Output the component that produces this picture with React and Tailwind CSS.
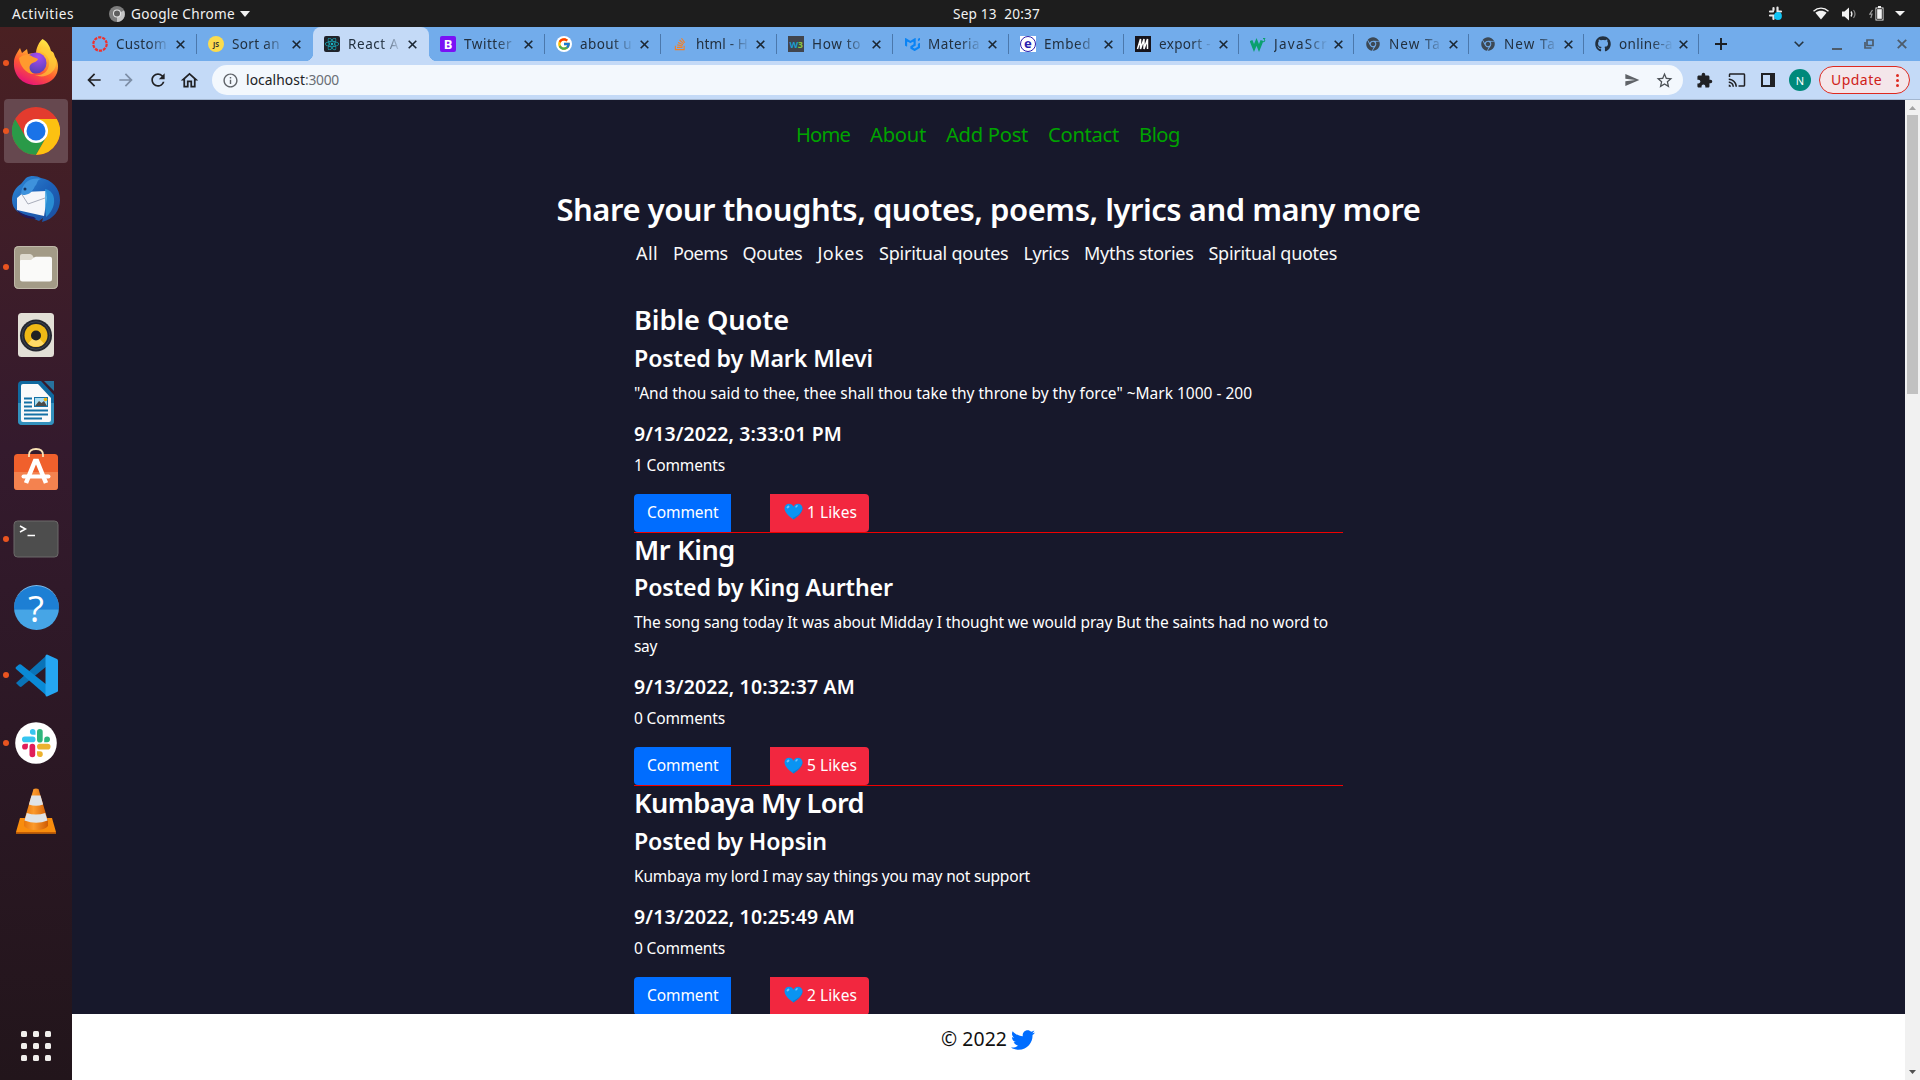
import React, { useLayoutEffect, useRef } from "react";
import { FaGithub, FaTwitter, FaChrome, FaReact, FaStackOverflow } from "react-icons/fa";
import { FcGoogle } from "react-icons/fc";
import { SiMui } from "react-icons/si";
import {
  MdExtension, MdCast, MdSend, MdStarBorder, MdArrowBack, MdArrowForward,
  MdRefresh, MdOutlineHome, MdInfoOutline,
} from "react-icons/md";

// Spreads the letters of one line so that it takes exactly `w` pixels.
function Fit({ w, className = "", children }) {
  const ref = useRef(null);
  useLayoutEffect(() => {
    const el = ref.current;
    el.style.letterSpacing = "0px";
    const natural = el.getBoundingClientRect().width;
    el.style.letterSpacing = `${(w - natural) / el.textContent.length}px`;
  }, [w, children]);
  return (
    <span ref={ref} className={`inline-block whitespace-pre ${className}`}>
      {children}
    </span>
  );
}

/* ---------- top bar ---------- */

function TopBar() {
  return (
    <header className="grid h-[27px] shrink-0 grid-cols-3 items-center bg-[#1d1d1d] text-[13.6px] leading-none text-[#f2f2f2]">
      <div className="flex items-center pl-3">
        <Fit w={62}>Activities</Fit>
        <svg className="mr-1.5 ml-[35px] h-4 w-4" viewBox="0 0 16 16">
          <circle cx="8" cy="8" r="8" fill="#7d7d7d" />
          <path d="M8 8 15 4.500A8 8 0 0 1 8 16Z" fill="#c4c4c4" />
          <circle cx="8" cy="7.500" r="4" fill="#e6e6e6" />
          <circle cx="8" cy="7.500" r="3" fill="#5e5e5e" />
        </svg>
        <Fit w={104}>Google Chrome</Fit>
        <svg className="ml-[5px] h-[6px] w-[10px]" viewBox="0 0 10 6"><path d="M0 0h10L5 6Z" fill="#f2f2f2" /></svg>
      </div>
      <div className="pl-[313px]">
        <Fit w={87}>{"Sep 13  20:37"}</Fit>
      </div>
      <div className="flex items-center justify-end pr-[15px]">
        <svg className="h-[15px] w-[15px]" viewBox="0 0 15 15">
          <g stroke="#e8e8e8" strokeWidth="2.200" strokeLinecap="round">
            <path d="M5.500 2v2M2 5.500h3M9.500 1.500v4M11 5.500h2M2 9.500h4M5.500 10v3" />
          </g>
          <circle cx="10" cy="10" r="3.900" fill="#0fc4f5" />
        </svg>
        <svg className="ml-[30px] h-[13px] w-[16px]" viewBox="0 0 16 13">
          <path d="M.5 4.200C5 .1 11 .1 15.500 4.200" fill="none" stroke="#f2f2f2" strokeWidth="1.400" />
          <path d="M2.400 5.800C6 3.200 10 3.200 13.600 5.800L8 12.500Z" fill="#f2f2f2" />
        </svg>
        <svg className="ml-[13px] h-[14px] w-[15px]" viewBox="0 0 15 14">
          <path d="M0 4.500h2.500L7 0.500v13L2.500 9.500H0Z" fill="#f2f2f2" />
          <path d="M9 4.500q1.800 2.500 0 5" fill="none" stroke="#f2f2f2" strokeWidth="1.300" />
          <path d="M11.500 3q3 4 0 8" fill="none" stroke="#8a8a8a" strokeWidth="1.200" />
        </svg>
        <svg className="ml-[12px] h-[15px] w-[15px]" viewBox="0 0 15 15">
          <path d="M3.500 4 .8 8.200H3L1.800 12" fill="none" stroke="#9a9a9a" strokeWidth="1.200" />
          <path d="M9 0h3v1.500h2.500v13h-8v-13H9Z" fill="#f2f2f2" />
          <path d="M7.700 2.700h5.600v10.600H7.700Z" fill="none" stroke="#1d1d1d" strokeWidth=".9" />
        </svg>
        <svg className="ml-[11px] h-[5px] w-[10px]" viewBox="0 0 10 5"><path d="M0 0h10L5 5Z" fill="#f2f2f2" /></svg>
      </div>
    </header>
  );
}

/* ---------- dock ---------- */

const Firefox = () => (
  <svg className="mb-[2px] h-[48px] w-[46px]" viewBox="0 0 46 48">
    <defs>
      <linearGradient id="ffBody" x1=".8" y1="0" x2=".3" y2="1">
        <stop offset="0" stopColor="#fff04a" /><stop offset=".35" stopColor="#ffb52e" />
        <stop offset=".65" stopColor="#ff5a32" /><stop offset="1" stopColor="#e5107c" />
      </linearGradient>
      <radialGradient id="ffGlobe" cx=".6" cy=".2" r=".9">
        <stop offset="0" stopColor="#a94cf0" /><stop offset="1" stopColor="#4d3fae" />
      </radialGradient>
    </defs>
    <path d="M29.500 1C35 4 37 9 38 13c3 1 3 3 4 6 3 4 4 10 2 16C41 43 33 47 23 47 9 47 0 37 1 24c0-5 3-9 6-14l2 5 5-4 1 5c3-1 6-1 8 0 0-6 3-12 6.500-15Z" fill="url(#ffBody)" />
    <circle cx="23" cy="25" r="10.500" fill="url(#ffGlobe)" />
    <path d="M6 20c5-4 10-4 14-1 2 1 4 1 5 2-1 3-4 3-7 5-3 3-1 8 3 10-8 0-14-8-15-16Z" fill="#ff9a2e" />
    <path d="M26 13c8 2 11 8 10 14-1 7-7 11-14 10 9 4 19-1 21-10 1-7-3-13-9-17-3-1-6 0-8 3Z" fill="#ffce3a" opacity=".65" />
  </svg>
);
const Chrome = () => (
  <svg className="h-12 w-12" viewBox="0 0 48 48">
    <circle cx="24" cy="24" r="24" fill="#e33b2e" />
    <path d="M3.200 12A24 24 0 0 0 24 48L34.400 30 24 24 13.600 30Z" fill="#2a9a48" />
    <path d="M24 12H44.800A24 24 0 0 1 24 48L34.400 30Z" fill="#fcc111" />
    <circle cx="24" cy="24" r="12" fill="#fff" />
    <circle cx="24" cy="24" r="9.500" fill="#1a73e8" />
  </svg>
);
const Thunderbird = () => (
  <svg className="h-12 w-12" viewBox="0 0 48 48">
    <defs>
      <linearGradient id="tb" x1="0" y1="0" x2="1" y2="1">
        <stop offset="0" stopColor="#2f8bd8" /><stop offset=".5" stopColor="#1d61b8" /><stop offset="1" stopColor="#1c4d9c" />
      </linearGradient>
    </defs>
    <path d="M14 3C19 0 25 1 29 3 40 5 48 13 48 25c0 10-6 19-18 22l1-4-4 3-21-9C2 34 0 30 0 25c0-7 4-13 9-16Z" fill="url(#tb)" />
    <path d="M5 34C8 39 16 41 22 42L24 44C14 44 6 40 5 34Z" fill="#231a5c" />
    <path d="M5 23 12 17 34 16 35 23 32 41 5 35Z" fill="#f5f6fa" />
    <path d="M9 18 16 29 33 23" fill="none" stroke="#a9adba" strokeWidth="1" />
    <path d="M9 19C10 8 18 2 29 4 24 5 26 9 23 11 20 18 16 20 11 20Z" fill="#3e92dc" />
    <path d="M33 14C45 16 45 33 34 42L33 30Z" fill="#2e9de0" opacity=".75" />
    <circle cx="13" cy="14" r="1.500" fill="#16335f" />
  </svg>
);
const Files = () => (
  <svg className="h-[45px] w-[46px]" viewBox="0 0 46 45">
    <rect x="1" y="1" width="44" height="43" rx="4.500" fill="#a39b87" />
    <rect x="1.500" y="1.500" width="43" height="42" rx="4" fill="none" stroke="#c0b9aa" />
    <path d="M7 11q0-2 2-2h8q1.500 0 2.500 1.500L21 13v4H7Z" fill="#dedace" />
    <path d="M7 16q0-1 1-1h10l3-2.500q1-.7 2-.7h14q2 0 2 2V34q0 2.500-2.500 2.500h-27Q7 36.500 7 34Z" fill="#fafaf9" />
  </svg>
);
const Rhythmbox = () => (
  <svg className="h-[46px] w-[38px]" viewBox="0 0 38 46">
    <rect x="1" y="1" width="36" height="44" rx="3.500" fill="#e2dfd6" />
    <circle cx="19" cy="23.500" r="16" fill="#24272f" />
    <circle cx="19" cy="23.500" r="13.800" fill="none" stroke="#3d4553" />
    <circle cx="19" cy="23.500" r="11.500" fill="#efb916" />
    <path d="M11 31.500a11.500 11.500 0 0 0 16 0L19 23Z" fill="#ffdb68" />
    <circle cx="19" cy="23.500" r="5" fill="#1f2023" />
  </svg>
);
const Writer = () => (
  <svg className="h-[46px] w-[38px]" viewBox="0 0 38 46">
    <path d="M5 1h19l13 14v26q0 4-4 4H5q-4 0-4-4V5q0-4 4-4Z" fill="#10699f" />
    <path d="M1 23h36v18q0 4-4 4H5q-4 0-4-4Z" fill="#3391bd" />
    <path d="M27 1h10v10Z" fill="#27729e" />
    <path d="M6 4h15l13 14v22q0 2-2 2H6q-2 0-2-2V6q0-2 2-2Z" fill="#fafafa" />
    <path d="M7 18.500h8M7 22.500h8M7 26.500h8M7 30.500h24M7 34.500h24M7 38.500h18" stroke="#1471a5" strokeWidth="2" />
    <rect x="17" y="17" width="14" height="10" fill="#1471a5" />
    <rect x="18" y="18" width="12" height="8" fill="#a8dcf0" />
    <path d="m18 26 4-5 2.500 2 2.500-2 3 5Z" fill="#4c4b47" />
    <circle cx="28.500" cy="19.500" r="1.800" fill="#eeb50b" />
  </svg>
);
const Software = () => (
  <svg className="mb-[5px] h-[44px] w-[46px]" viewBox="0 0 46 44">
    <rect x="1" y="7" width="44" height="36" rx="3.500" fill="#f0602c" />
    <path d="M1 25h44v14.500q0 3.500-3.500 3.500h-37Q1 43 1 39.500Z" fill="#f4824f" />
    <path d="M16 10V8q0-6 7-6t7 6v2" fill="none" stroke="#f9e2b4" strokeWidth="1.800" />
    <path d="M13 36 22 14h2l9 22" fill="none" stroke="#fff" strokeWidth="4.500" />
    <path d="M10.500 29.500h25" stroke="#fff" strokeWidth="4" strokeLinecap="round" />
  </svg>
);
const Terminal = () => (
  <svg className="h-[38px] w-[46px]" viewBox="0 0 46 38">
    <rect x="1" y="1" width="44" height="36" rx="3.500" fill="#4d4d4d" stroke="#6d6a6a" />
    <path d="m7 6 5.500 3L7 12M14.500 15.500H22" fill="none" stroke="#fff" strokeWidth="1.500" />
  </svg>
);
const Help = () => (
  <div className="flex h-[45px] w-[45px] items-center justify-center rounded-full border-t border-[#7bbcec] bg-linear-to-b from-[#1d7fd4] from-53% to-[#46a5e6] to-54% font-['Open_Sans'] text-[37px] leading-none text-white">
    ?
  </div>
);
const VsCode = () => (
  <svg className="h-[43px] w-[43px]" viewBox="0 0 43 43">
    <path d="M1 29 32 1v11L6 33q-1 0-2-1Z" fill="#0a73b7" />
    <path d="M1 15q-1-1 0-2l3-2.500q1-.7 2 0L32 31v11Z" fill="#0a8ad6" />
    <path d="M32 .5 42 5q1 .5 1 1.500v30q0 1-1 1.500L32 42.500Q30.500 42.500 30.500 41V2Q30.500.7 32 .5Z" fill="#25a6f2" />
  </svg>
);
const Slack = () => (
  <svg className="h-[42px] w-[42px]" viewBox="0 0 42 42">
    <circle cx="21" cy="21" r="20.800" fill="#fff" />
    <g fill="#36c5f0"><rect x="7" y="14.500" width="13.500" height="5.700" rx="2.800" /><path d="M20.500 12.700h-3a2.800 2.800 0 1 1 3-2.900Z" /></g>
    <g fill="#2eb67d"><rect x="22" y="7" width="5.700" height="13.500" rx="2.800" /><path d="M29.200 20.200v-3a2.900 2.900 0 1 1 2.900 3Z" /></g>
    <g fill="#ecb22e"><rect x="22" y="21.800" width="13.500" height="5.700" rx="2.800" /><path d="M22 29.200h3a2.900 2.900 0 1 1-3 2.900Z" /></g>
    <g fill="#e01e5a"><rect x="14.500" y="21.800" width="5.700" height="13.500" rx="2.800" /><path d="M12.900 21.800v3a2.900 2.900 0 1 1-2.900-3Z" /></g>
  </svg>
);
const Vlc = () => (
  <svg className="h-[46px] w-[42px]" viewBox="0 0 42 46">
    <defs>
      <linearGradient id="cone" x1="0" x2="1" y1="0" y2="0">
        <stop offset="0" stopColor="#e8770c" /><stop offset=".4" stopColor="#fb9a2c" /><stop offset="1" stopColor="#cf5b04" />
      </linearGradient>
    </defs>
    <path d="M5 30h32l4 14v1.500H1V44Z" fill="#f98d0d" />
    <path d="M1 44h40v1.500H1Z" fill="#c45d04" />
    <path d="M18.500 1q2.500-1 5 0L33 33v5q-3 4-12 4T9 38v-5Z" fill="url(#cone)" />
    <path d="M16.500 7.500h9l2.600 9q-7 2.500-14.200 0ZM11.800 25q9 3 18.400 0l2.300 7.500q-11 4.500-23 0Z" fill="#dfe3e6" />
  </svg>
);

const dock = [
  { icon: <Firefox />, running: true },
  { icon: <Chrome />, running: true, active: true },
  { icon: <Thunderbird /> },
  { icon: <Files />, running: true },
  { icon: <Rhythmbox /> },
  { icon: <Writer /> },
  { icon: <Software /> },
  { icon: <Terminal />, running: true },
  { icon: <Help /> },
  { icon: <VsCode />, running: true },
  { icon: <Slack />, running: true },
  { icon: <Vlc /> },
];

function Dock() {
  return (
    <aside className="flex w-[72px] shrink-0 flex-col bg-linear-to-b from-[#4a2022] via-[#341a2d] via-40% to-[#22151b] pt-[2px]">
      {dock.map((d, i) => (
        <div key={i} className="flex h-[68px] items-center">
          <span className={`ml-1 flex h-16 w-16 items-center justify-center rounded-[4px] ${d.active ? "bg-[#66484f]" : ""}`}>
            <span className={`-ml-px h-[6px] w-[6px] shrink-0 rounded-full ${d.running ? "bg-[#e95420]" : ""}`} />
            <span className="mr-[5px] flex flex-1 justify-center">{d.icon}</span>
          </span>
        </div>
      ))}
      <div className="mt-auto mb-[19px] ml-[21px] grid w-[30px] grid-cols-3 gap-[6px]">
        {Array.from({ length: 9 }, (_, i) => (
          <span key={i} className="h-[6px] w-[6px] rounded-[1.500px] bg-[#f0eeec]" />
        ))}
      </div>
    </aside>
  );
}

/* ---------- browser chrome ---------- */

const Box = ({ className, children }) => (
  <span className={`flex h-4 w-4 items-center justify-center ${className}`}>{children}</span>
);

const tabs = [
  ["Custom", 51, <svg viewBox="0 0 16 16" className="h-4 w-4"><circle cx="8" cy="8" r="6.700" fill="none" stroke="#f0302c" strokeWidth="2.200" strokeDasharray="3.200 1.010" /></svg>],
  ["Sort an", 48, <Box className="rounded-full bg-[#fcdc4d] text-[7px] font-bold text-[#333]">JS</Box>],
  ["React A", 51, <Box className="rounded-[2px] bg-[#20232a]"><FaReact size={14} color="#19b5c4" /></Box>],
  ["Twitter", 48, <Box className="rounded-[2px] bg-[#7a12f5] text-[13px] font-bold text-white">B</Box>],
  ["about u", 52, <Box className="rounded-full bg-white"><FcGoogle size={14} /></Box>],
  ["html - H", 52, <FaStackOverflow size={14} color="#f58025" />],
  ["How to", 49, <Box className="bg-[#41454d] text-[9px] font-bold tracking-[-0.500px] text-[#1b9dd0]">W<span className="text-[#8cc63f]">3</span></Box>],
  ["Materia", 52, <SiMui size={15} color="#0a84f5" />],
  ["Embed", 47, <Box className="bg-white"><span className="flex h-4 w-4 items-center justify-center rounded-full border border-[#2a1fae] pb-[2px] text-[13px] font-bold text-[#2a1fae]">e</span></Box>],
  ["export -", 52, <Box className="bg-[#16141c]"><svg viewBox="0 0 16 16" className="h-4 w-4"><path d="M2.500 13 5.500 3v10L9 3v10L12.500 3v10" fill="none" stroke="#fff" strokeWidth="1.500" /></svg></Box>],
  ["JavaScr", 54, <svg viewBox="0 0 16 16" className="h-4 w-4"><path d="M1 4.500 4 12 6.500 6 9 12l3-7.500" fill="none" stroke="#0aa06e" strokeWidth="3" /><path d="M13 2.500h2l-1 1.500q1.500.3.500 1.500l-1.500.3" fill="none" stroke="#0aa06e" /></svg>],
  ["New Ta", 52, <FaChrome size={14} color="#3c4854" />],
  ["New Ta", 52, <FaChrome size={14} color="#3c4854" />],
  ["online-a", 54, <FaGithub size={16} color="#22303f" />],
];

const X = ({ size = 9, color = "#1b2733" }) => (
  <svg width={size} height={size} viewBox="0 0 9 9" className="shrink-0"><path d="m.7.700 7.600 7.600M8.300.700.7 8.300" stroke={color} strokeWidth="1.600" /></svg>
);

function Tab({ tab: [title, w, icon], active, narrow, divider }) {
  return (
    <div className={`relative flex h-[34px] shrink-0 items-center pl-[11px] text-[13.500px] leading-none text-[#22303f] ${narrow ? "w-[115px]" : "w-[116px]"} ${active ? "rounded-t-lg bg-[#c4daf7]" : ""}`}>
      <span className="flex h-4 w-4 shrink-0 items-center justify-center">{icon}</span>
      <span className="ml-[8px] w-[54px] mask-r-from-60% mask-r-to-100% pt-[6px] pb-1">
        <Fit w={w}>{title}</Fit>
      </span>
      <span className="ml-[6px]"><X /></span>
      {active && (
        <>
          <span className="absolute bottom-0 -left-2 h-2 w-2 bg-[radial-gradient(circle_at_0_0,transparent_8px,#c4daf7_8.5px)]" />
          <span className="absolute -right-2 bottom-0 h-2 w-2 bg-[radial-gradient(circle_at_100%_0,transparent_8px,#c4daf7_8.5px)]" />
        </>
      )}
      {divider && <span className="absolute top-[7px] right-0 h-5 w-px bg-[#4b78ac]" />}
    </div>
  );
}

function Browser() {
  return (
    <>
      <div className="flex h-[34px] shrink-0 items-center bg-[#72aceb] pl-[9px]">
        {tabs.map((t, i) => (
          <Tab key={i} tab={t} active={i === 2} narrow={i > 7} divider={i !== 1 && i !== 2} />
        ))}
        <svg className="ml-[16px] h-3 w-3" viewBox="0 0 12 12"><path d="M6 0v12M0 6h12" stroke="#1b1f24" strokeWidth="1.900" /></svg>
        <svg className="ml-[67px] h-[6px] w-[10px]" viewBox="0 0 10 6"><path d="m.7.700 4.300 4.300L9.300.7" fill="none" stroke="#26343f" strokeWidth="1.600" /></svg>
        <span className="mt-[9px] ml-[28px] h-[2px] w-[10px] bg-[#4d5b6a]" />
        <svg className="ml-[22px] h-[10px] w-[10px]" viewBox="0 0 10 10"><path d="M3 1h6v5.500H3ZM1 3v6h6.500" fill="none" stroke="#4d5b6a" strokeWidth="1.700" /></svg>
        <span className="ml-[23px]"><X size={10} color="#4d5b6a" /></span>
      </div>
      <div className="flex h-[39px] shrink-0 items-center border-b border-[#a3b6cf] bg-[#c4daf7] pl-[12px] text-[#202124]">
        <MdArrowBack size={20} />
        <MdArrowForward size={20} className="ml-3 text-[#7d8ea6]" />
        <MdRefresh size={20} className="ml-3" />
        <MdOutlineHome size={21} className="ml-[11px]" />
        <div className="ml-[12px] flex h-[30px] w-[1471px] items-center rounded-full bg-[#f3f8fd] pr-[9px] pl-[10px] text-[13.800px] leading-none">
          <MdInfoOutline size={17} color="#5f6368" />
          <span className="ml-[7px]"><Fit w={59}>localhost</Fit><Fit w={34} className="text-[#6a6f75]">:3000</Fit></span>
          <MdSend size={16} className="ml-auto" color="#5f6368" />
          <MdStarBorder size={19} className="ml-[15px]" color="#4c5156" />
        </div>
        <MdExtension size={17} className="ml-[13px]" />
        <MdCast size={18} className="ml-[15px]" />
        <svg className="ml-[15px] h-[14px] w-[14px]" viewBox="0 0 14 14"><path d="M1 1h12v12H1ZM11 1v12" fill="none" stroke="#202124" strokeWidth="2" /><path d="M9 1h4v12H9Z" fill="#202124" /></svg>
        <span className="ml-[14px] flex h-[22px] w-[22px] items-center justify-center rounded-full bg-[#00897b] text-[11px] leading-none text-white">N</span>
        <span className="ml-2 flex h-7 w-[91px] items-center rounded-full border border-[#de2a20] bg-[#f4e6ea] pl-[11px] text-[14px] leading-none text-[#cf2117]">
          <Fit w={51}>Update</Fit>
          <svg className="ml-[14px] h-[13px] w-[3px]" viewBox="0 0 3 13" fill="#de2a20"><circle cx="1.500" cy="1.500" r="1.500" /><circle cx="1.500" cy="6.500" r="1.500" /><circle cx="1.500" cy="11.500" r="1.500" /></svg>
        </span>
      </div>
    </>
  );
}

/* ---------- page ---------- */

const nav = [["Home", 54], ["About", 56], ["Add Post", 82], ["Contact", 71], ["Blog", 41]];
const categories = [
  ["All", 22], ["Poems", 54.5], ["Qoutes", 60], ["Jokes", 46.5], ["Spiritual qoutes", 129.5],
  ["Lyrics", 45.5], ["Myths stories", 109.5], ["Spiritual quotes", 128.5],
];
const posts = [
  {
    title: ["Bible Quote", 155], author: ["Posted by Mark Mlevi", 239],
    lines: [['"And thou said to thee, thee shall thou take thy throne by thy force" ~Mark 1000 - 200', 618]],
    date: ["9/13/2022, 3:33:01 PM", 208], comments: "1 Comments", likes: "1 Likes",
  },
  {
    title: ["Mr King", 101], author: ["Posted by King Aurther", 259],
    lines: [["The song sang today It was about Midday I thought we would pray But the saints had no word to", 694], ["say", 23]],
    date: ["9/13/2022, 10:32:37 AM", 221], comments: "0 Comments", likes: "5 Likes",
  },
  {
    title: ["Kumbaya My Lord", 230], author: ["Posted by Hopsin", 193],
    lines: [["Kumbaya my lord I may say things you may not support", 396]],
    date: ["9/13/2022, 10:25:49 AM", 221], comments: "0 Comments", likes: "2 Likes",
  },
];

const Heart = () => (
  <svg className="h-[17px] w-[19px]" viewBox="0 0 19 17">
    <path d="M9.500 16.500C5 13.500.5 9.500.5 5.300.5 2.500 2.500.700 5 .700c2 0 3.600 1 4.500 3 .9-2 2.500-3 4.500-3 2.500 0 4.500 1.800 4.500 4.600 0 4.200-4.500 8.200-9 11.200Z" fill="#0a94f2" />
    <path d="M18.200 3.500c.8 5-4.200 9.500-9.700 11.500l1 1.500c4.500-3 9-7 9-11.200 0-.7-.1-1.300-.3-1.800Z" fill="#1379c9" />
    <ellipse cx="4" cy="4" rx="1.600" ry="1.100" transform="rotate(-40 4 4)" fill="#6fc3fb" />
    <ellipse cx="12.500" cy="3.300" rx="1.500" ry=".8" transform="rotate(-40 12.500 3.300)" fill="#6fc3fb" />
  </svg>
);

function Post({ post }) {
  return (
    <article className="border-b border-[#f00000] text-white">
      <h3 className="mb-[7px] text-[27.2px] leading-[33.6px] font-[560]"><Fit w={post.title[1]}>{post.title[0]}</Fit></h3>
      <h4 className="mb-2 text-[23.2px] leading-[28.8px] font-[560]"><Fit w={post.author[1]}>{post.author[0]}</Fit></h4>
      <div className="mb-[17px] flex flex-col items-start text-[15.5px] leading-6">
        {post.lines.map(([text, w]) => <Fit key={text} w={w}>{text}</Fit>)}
      </div>
      <h5 className="mb-[7px] text-[19.4px] leading-6 font-[560]"><Fit w={post.date[1]}>{post.date[0]}</Fit></h5>
      <p className="mb-[17px] text-[15.5px] leading-6"><Fit w={91}>{post.comments}</Fit></p>
      <div className="flex h-[38px] text-[15.5px] leading-6">
        <button className="flex w-[97px] items-center rounded-l-[4px] bg-[#006dff] pb-[2px] pl-[13px]"><Fit w={71.5}>Comment</Fit></button>
        <button className="ml-[39px] flex w-[99px] items-center rounded-r-[4px] bg-[#f2273f] pb-[2px] pl-[14px]">
          <Heart />
          <Fit w={50} className="ml-[4px]">{post.likes}</Fit>
        </button>
      </div>
    </article>
  );
}

function Page() {
  return (
    <div className="flex min-h-0 flex-1">
      <div className="flex w-[1833px] flex-col bg-[#17182b]">
        <main className="flex h-[914px] shrink-0 flex-col items-center overflow-hidden">
          <nav className="mt-[18px] flex h-8 items-center gap-5 pr-px text-[20.2px] leading-8 text-[#00a300]">
            {nav.map(([t, w]) => <Fit key={t} w={w}>{t}</Fit>)}
          </nav>
          <h2 className="mt-[40px] text-[31px] leading-[38.4px] font-[560] text-white">
            <Fit w={864}>Share your thoughts, quotes, poems, lyrics and many more</Fit>
          </h2>
          <div className="mt-[11px] flex h-7 items-center gap-[15px] pr-1 text-[18px] leading-7 text-[#f8f8f8]">
            {categories.map(([t, w]) => <Fit key={t} w={w}>{t}</Fit>)}
          </div>
          <section className="mt-[36px] w-[709px]">
            {posts.map((p) => <Post key={p.title[0]} post={p} />)}
          </section>
        </main>
        <footer className="flex flex-1 items-start justify-center bg-white pt-[10px] pr-px text-[19.4px] leading-[30px] text-[#111]">
          <Fit w={66}>© 2022</Fit>
          <FaTwitter size={24} className="mt-[4px] ml-[4px] text-[#006dff]" />
        </footer>
      </div>
      <div className="flex w-[15px] flex-col items-center justify-between bg-[#f1f1f1] py-[6px]">
        <div className="flex flex-col items-center gap-[5px]">
          <svg className="h-[4px] w-[7px]" viewBox="0 0 7 4"><path d="M0 4h7L3.500 0Z" fill="#a3a3a3" /></svg>
          <div className="h-[279px] w-[11px] bg-[#c1c1c1]" />
        </div>
        <svg className="h-[4px] w-[7px]" viewBox="0 0 7 4"><path d="M0 0h7L3.500 4Z" fill="#505050" /></svg>
      </div>
    </div>
  );
}

export default function App() {
  return (
    <div className="flex h-[1080px] w-[1920px] flex-col overflow-hidden font-['Noto_Sans',sans-serif]">
      <TopBar />
      <div className="flex min-h-0 flex-1">
        <Dock />
        <div className="flex min-w-0 flex-1 flex-col">
          <Browser />
          <Page />
        </div>
      </div>
    </div>
  );
}
